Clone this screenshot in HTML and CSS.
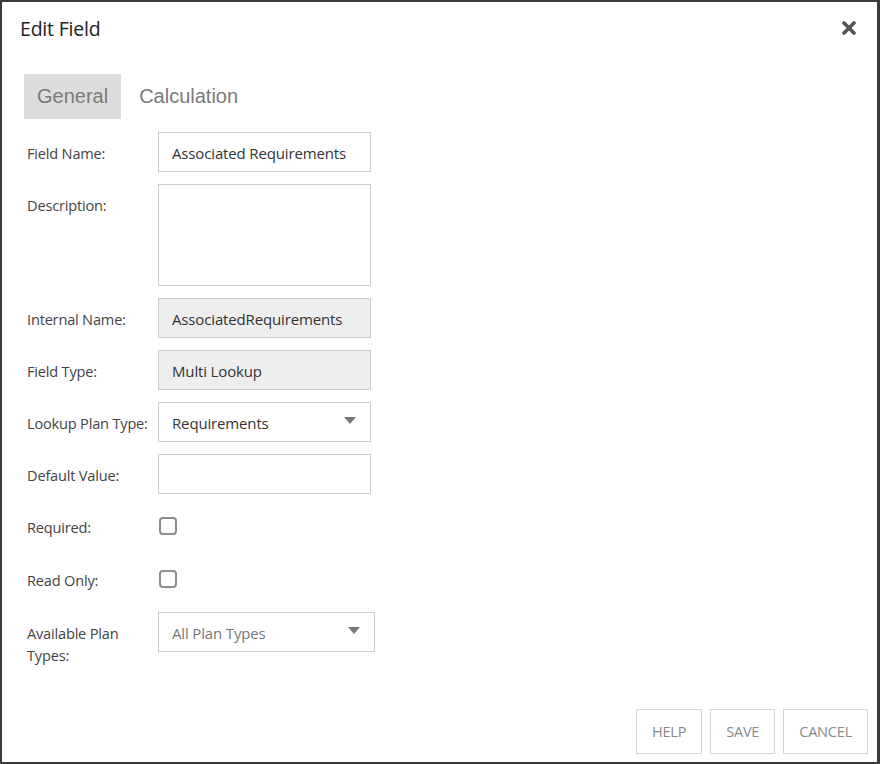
FILE: index.html
```html
<!doctype html>
<html>
  <head>
    <meta charset="UTF-8">
    <title>Edit Field</title>
    <link rel="stylesheet" href="styles.css">
  </head>
  <body>
    <div class="modal">
      <div class="modal-header">
        <h1>Edit Field</h1>
        <button class="close-button" title="Close">
          <svg width="14" height="14" viewBox="0 0 14 14">
            <path d="M2 2 L12 12 M12 2 L2 12" stroke="#555" stroke-width="3.6" stroke-linecap="round" />
          </svg>
        </button>
      </div>

      <div class="tabs">
        <div class="tab active">General</div>
        <div class="tab">Calculation</div>
      </div>

      <div class="form">
        <div class="form-row">
          <label class="form-label">Field Name:</label>
          <div class="input">Associated Requirements</div>
        </div>
        <div class="form-row">
          <label class="form-label">Description:</label>
          <div class="input textarea"></div>
        </div>
        <div class="form-row">
          <label class="form-label">Internal Name:</label>
          <div class="input readonly">AssociatedRequirements</div>
        </div>
        <div class="form-row">
          <label class="form-label">Field Type:</label>
          <div class="input readonly">Multi Lookup</div>
        </div>
        <div class="form-row">
          <label class="form-label">Lookup Plan Type:</label>
          <div class="input select">
            <span>Requirements</span>
            <span class="caret"></span>
          </div>
        </div>
        <div class="form-row">
          <label class="form-label">Default Value:</label>
          <div class="input"></div>
        </div>
        <div class="form-row check-row">
          <label class="form-label">Required:</label>
          <span class="checkbox"></span>
        </div>
        <div class="form-row check-row">
          <label class="form-label">Read Only:</label>
          <span class="checkbox"></span>
        </div>
        <div class="form-row">
          <label class="form-label">Available Plan Types:</label>
          <div class="input select wide placeholder">
            <span>All Plan Types</span>
            <span class="caret"></span>
          </div>
        </div>
      </div>

      <div class="modal-footer">
        <button class="footer-button">Help</button>
        <button class="footer-button">Save</button>
        <button class="footer-button">Cancel</button>
      </div>
    </div>
  </body>
</html>
```

FILE: styles.css
```css
* {
  margin: 0;
  padding: 0;
  box-sizing: border-box;
}

body {
  width: 880px;
  height: 764px;
  font-family: "Open Sans", "Noto Sans", Arial, sans-serif;
  color: #444;
  background: #ffffff;
}

.modal {
  width: 880px;
  height: 764px;
  display: flex;
  flex-direction: column;
  border: 2px solid #3b3b3b;
  border-right-width: 3px;
  background: #ffffff;
}

.modal-header {
  display: flex;
  align-items: center;
  justify-content: space-between;
  padding: 6px 21px 0 18px;
  height: 40px;
  box-sizing: content-box;
}

h1 {
  font-size: 19.5px;
  font-weight: 400;
  color: #222;
  letter-spacing: -0.2px;
}

.close-button {
  border: none;
  background: none;
  width: 14px;
  height: 14px;
  display: flex;
  cursor: pointer;
}

/* Tabs */
.tabs {
  display: flex;
  margin: 26px 0 0 22px;
}

.tab {
  height: 45px;
  line-height: 45px;
  padding: 0 13px 0 13px;
  font-family: "Liberation Sans", Arial, sans-serif;
  font-size: 20px;
  color: #7a7a7a;
  margin-right: 5px;
}

.tab.active {
  background: #dddddd;
}

/* Form */
.form {
  display: flex;
  flex-direction: column;
  gap: 12px;
  padding: 13px 0 0 25px;
}

.form-row {
  display: grid;
  grid-template-columns: 131px auto;
  align-items: start;
}

.form-label {
  font-size: 14.6px;
  line-height: 22px;
  padding-top: 10px;
  padding-right: 4px;
  color: #444;
  letter-spacing: -0.2px;
}

.input {
  width: 213px;
  height: 40px;
  border: 1px solid #cccccc;
  padding: 1px 13px 0;
  font-size: 15px;
  line-height: 38px;
  color: #333;
  letter-spacing: -0.15px;
  white-space: nowrap;
  overflow: hidden;
}

.input.textarea {
  height: 102px;
}

.input.readonly {
  background: #eeeeee;
}

.input.select {
  display: flex;
  align-items: center;
  justify-content: space-between;
  padding-right: 14px;
  line-height: normal;
  padding-top: 2px;
}

.input.wide {
  width: 217px;
}

.input.placeholder {
  color: #777;
}

.caret {
  width: 0;
  height: 0;
  border-left: 6.5px solid transparent;
  border-right: 6.5px solid transparent;
  border-top: 7px solid #777;
  margin-top: -6px;
}

.check-row {
  height: 41px;
}

.checkbox {
  width: 18px;
  height: 18px;
  margin: 11px 0 0 1px;
  border: 2px solid #8c8c8c;
  border-radius: 4px;
  background: #fff;
}

/* Footer */
.modal-footer {
  margin-top: auto;
  display: flex;
  justify-content: flex-end;
  gap: 8px;
  padding: 0 9px 8px 0;
}

.footer-button {
  height: 45px;
  padding: 0 15px;
  border: 1px solid #d6d6d6;
  background: #ffffff;
  font-family: "Open Sans", "Noto Sans", Arial, sans-serif;
  font-size: 14.5px;
  letter-spacing: -0.2px;
  text-transform: uppercase;
  color: #8a8a8a;
  cursor: pointer;
}
```
